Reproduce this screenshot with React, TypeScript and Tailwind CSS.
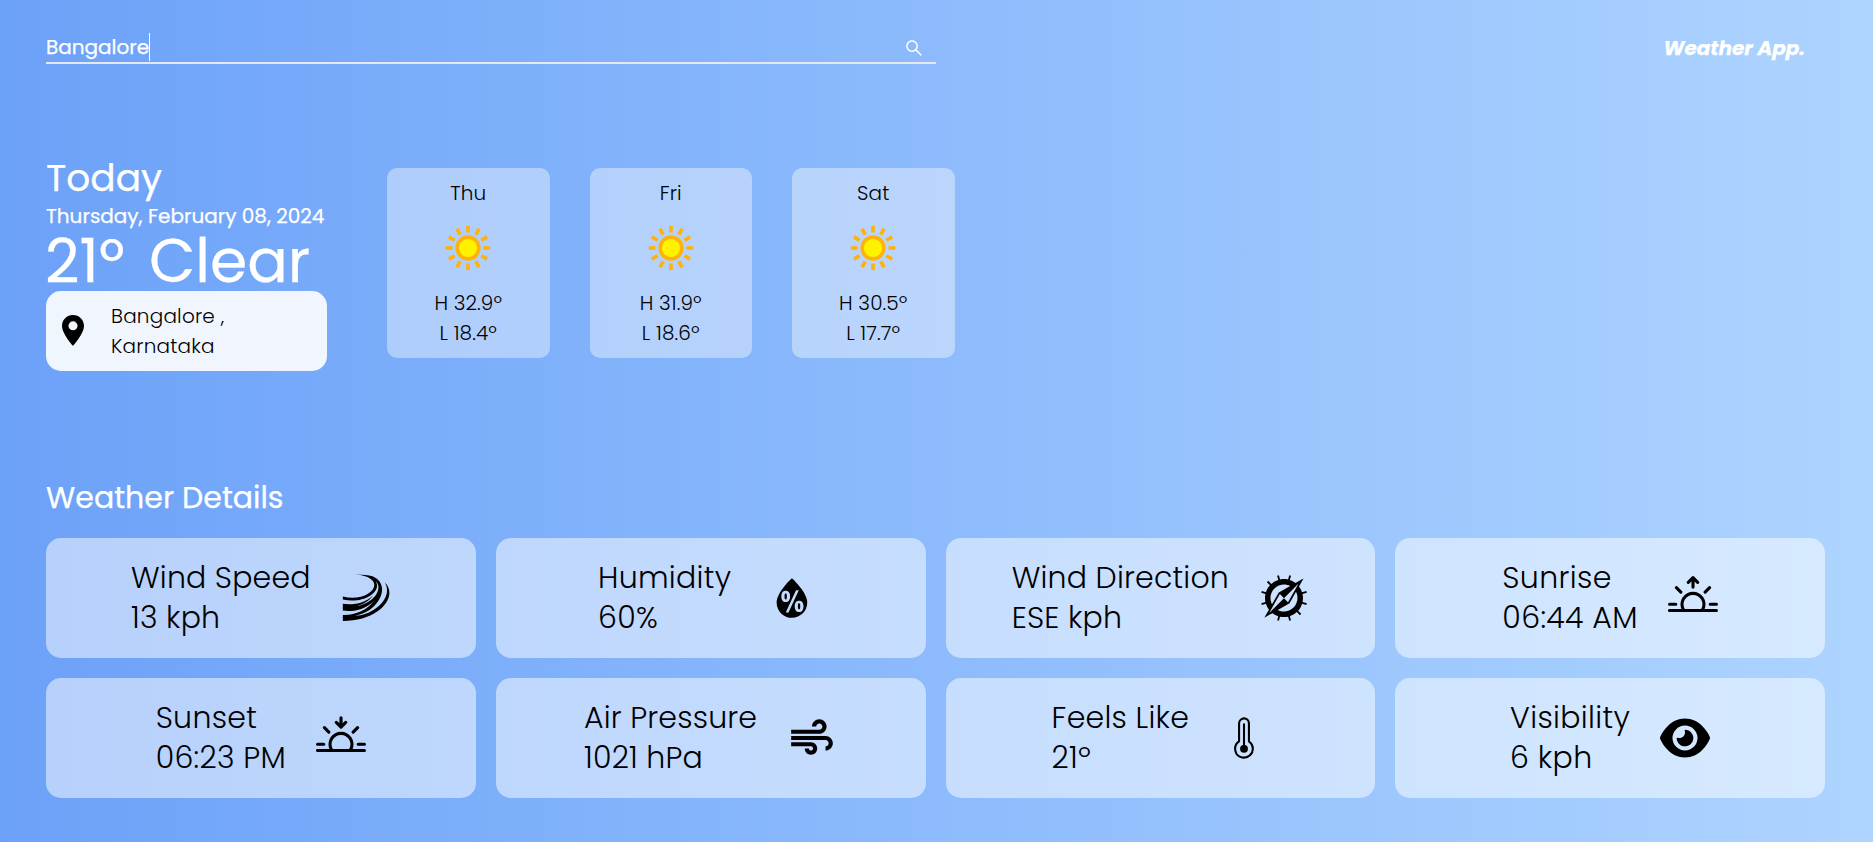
import type { IconType } from 'react-icons';
import { AiOutlineSearch } from 'react-icons/ai';
import { BsSunrise, BsSunset } from 'react-icons/bs';
import { CiTempHigh } from 'react-icons/ci';
import { FaEye } from 'react-icons/fa6';
import { GiCompass, GiWindSlap } from 'react-icons/gi';
import { MdAir } from 'react-icons/md';
import { WiHumidity } from 'react-icons/wi';

const forecast = [
  { day: 'Thu', high: '32.9', low: '18.4' },
  { day: 'Fri', high: '31.9', low: '18.6' },
  { day: 'Sat', high: '30.5', low: '17.7' },
];

type Detail = { label: string; value: string; Icon: IconType; size?: number; tracking: string };

const details: Detail[] = [
  { label: 'Wind Speed', value: '13 kph', Icon: GiWindSlap, tracking: 'tracking-[0.17px]' },
  { label: 'Humidity', value: '60%', Icon: WiHumidity, size: 62, tracking: 'tracking-[0.28px]' },
  { label: 'Wind Direction', value: 'ESE kph', Icon: GiCompass, tracking: 'tracking-[0.18px]' },
  { label: 'Sunrise', value: '06:44 AM', Icon: BsSunrise, tracking: 'tracking-[0.35px]' },
  { label: 'Sunset', value: '06:23 PM', Icon: BsSunset, tracking: 'tracking-[0.3px]' },
  { label: 'Air Pressure', value: '1021 hPa', Icon: MdAir, tracking: 'tracking-[0.17px]' },
  { label: 'Feels Like', value: '21º', Icon: CiTempHigh, tracking: 'tracking-[0.25px]' },
  { label: 'Visibility', value: '6 kph', Icon: FaEye, tracking: 'tracking-[0.34px]' },
];

const rays = [0, 30, 60, 90, 120, 150, 180, 210, 240, 270, 300, 330];

function Sun() {
  return (
    <svg className="size-16" viewBox="0 0 64 64">
      <circle cx="32" cy="32" r="10.9" fill="#fff200" stroke="#ffb20a" strokeWidth="3.6" />
      {rays.map((angle) => (
        <path key={angle} d="M32 9.8v6.7" stroke="#ffb20a" strokeWidth="3.7" transform={`rotate(${angle} 32 32)`} />
      ))}
    </svg>
  );
}

function Pin() {
  return (
    <svg className="mb-px h-[31px] w-[22px] shrink-0" viewBox="5 2 14 20" preserveAspectRatio="none" fill="currentColor">
      <path
        fillRule="evenodd"
        d="M12 2C8.13 2 5 5.13 5 9c0 5.25 7 13 7 13s7-7.75 7-13c0-3.87-3.13-7-7-7zm0 9.9a2.9 2.9 0 1 1 0-5.8 2.9 2.9 0 0 1 0 5.8z"
      />
    </svg>
  );
}

export default function App() {
  return (
    <div className="h-[842px] w-full overflow-hidden bg-linear-to-r from-[#6ca1f8] to-[#aed4ff] pl-[46px] font-['Poppins','Open_Sans',sans-serif] text-white">
      <header className="flex h-[64px] w-[1779px] items-end justify-between">
        <div className="flex h-[32px] w-[890px] items-center justify-between border-b-2 border-[#e5e7eb] pr-3">
          <div className="flex items-center text-xl leading-[30px]">
            <span className="[-webkit-text-stroke:0.25px_white]">Bangalore</span>
            <span className="h-7 w-px bg-white" />
          </div>
          <AiOutlineSearch size={20} className="mt-0.5" />
        </div>
        <h1 className="mr-5 mb-px text-xl leading-[30px] font-bold italic [-webkit-text-stroke:0.25px_white]">Weather App.</h1>
      </header>

      <main className="w-[1779px]">
        <section className="flex gap-[60px] pt-[91px]">
          <div className="w-[281px]">
            <div className="[-webkit-text-stroke:0.25px_white]">
              <h2 className="text-[37.5px] leading-[46px]">Today</h2>
              <p className="text-xl leading-[30px] whitespace-nowrap">Thursday, February 08, 2024</p>
              <p className="-ml-px flex gap-6 text-[60px] leading-[60px] whitespace-nowrap">
                <span>21º</span>
                <span>Clear</span>
              </p>
            </div>
            <div className="flex h-20 items-center rounded-[15px] bg-white/90 pl-4 text-xl leading-[30px] font-light tracking-[0.2px] text-black">
              <Pin />
              <p className="ml-[27px]">
                Bangalore ,
                <br />
                Karnataka
              </p>
            </div>
          </div>
          <div className="flex gap-10 pt-[13px]">
            {forecast.map(({ day, high, low }) => (
              <div
                key={day}
                className="flex h-[190px] w-[162.5px] flex-col items-center justify-between rounded-[10px] bg-white/40 p-2.5 text-xl leading-[30px] font-light tracking-[0.1px] text-black"
              >
                <p>{day}</p>
                <Sun />
                <div className="text-center">
                  <p>H {high}º</p>
                  <p>L {low}º</p>
                </div>
              </div>
            ))}
          </div>
        </section>

        <section className="pt-[107px]">
          <h2 className="text-3xl leading-10 [-webkit-text-stroke:0.25px_white]">Weather Details</h2>
          <div className="mt-5 grid grid-cols-4 gap-5">
            {details.map(({ label, value, Icon, size = 50, tracking }) => (
              <div
                key={label}
                className="flex h-[120px] items-center justify-center gap-[30px] rounded-[15px] bg-white/50 text-3xl font-light text-black"
              >
                <div className={`leading-10 ${tracking}`}>
                  <p>{label}</p>
                  <p>{value}</p>
                </div>
                <Icon size={size} />
              </div>
            ))}
          </div>
        </section>
      </main>
    </div>
  );
}
